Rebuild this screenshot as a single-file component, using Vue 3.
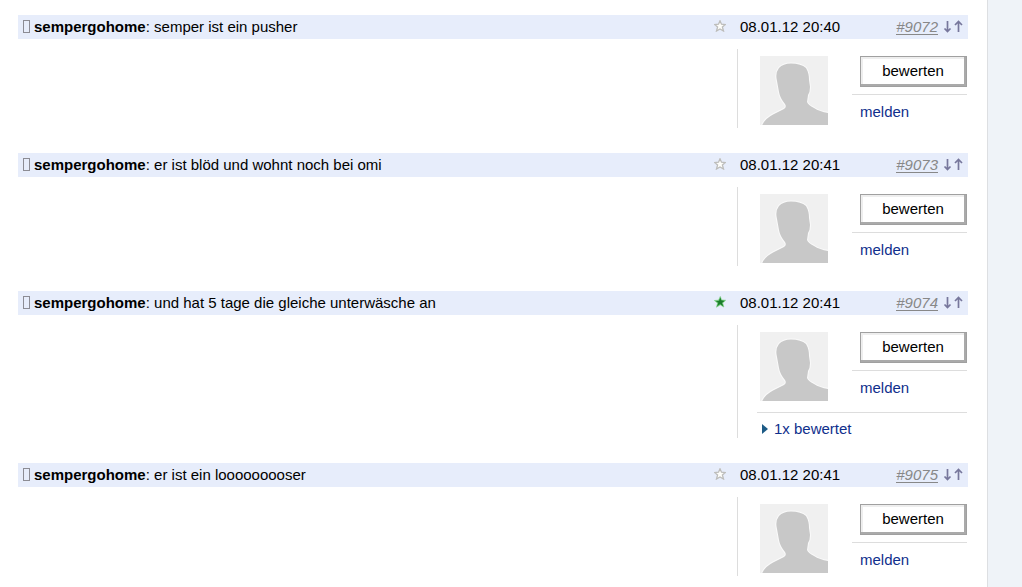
<script setup>
const posts = [
  { id: 9072, user: 'sempergohome', text: 'semper ist ein pusher', date: '08.01.12 20:40', ratings: 0 },
  { id: 9073, user: 'sempergohome', text: 'er ist blöd und wohnt noch bei omi', date: '08.01.12 20:41', ratings: 0 },
  { id: 9074, user: 'sempergohome', text: 'und hat 5 tage die gleiche unterwäsche an', date: '08.01.12 20:41', ratings: 1 },
  { id: 9075, user: 'sempergohome', text: 'er ist ein looooooooser', date: '08.01.12 20:41', ratings: 0 },
]
</script>

<template>
  <div class="page">
    <main class="thread">
      <article v-for="post in posts" :id="'p' + post.id" :key="post.id" class="post">
        <header class="bar">
          <span class="mark"></span>
          <h2 class="title"><b>{{ post.user }}</b>: {{ post.text }}</h2>
          <div class="meta">
            <svg class="star" viewBox="0 0 12 12" aria-hidden="true">
              <template v-if="post.ratings">
                <path
                  d="M6.300 .5 7.500 4 11.600 4.300 8.600 6.900 9.800 11 6.200 8.800 2.500 11.200 3.600 7 .4 4.500 4.600 4.200Z"
                  fill="#3fae4b" stroke="#7fcf85" stroke-width=".7"
                />
                <path d="M6.300 1.500 7.200 4.600 10.500 5 7.800 6.800 9.200 10.200 6 7.800 3.300 10 4.500 6.600 2 5.200 5.200 5Z" fill="#1c7a2c" />
              </template>
              <path
                v-else
                d="M6 .8 7.500 4.200 11.300 4.500 8.400 7 9.500 11 6 8.900 2.500 11 3.600 7 .7 4.500 4.500 4.200Z"
                fill="#fdfdfa" stroke="#bdbdbb" stroke-width="1.300"
              />
            </svg>
            <time>{{ post.date }}</time>
            <a class="number" :href="'#p' + post.id">#{{ post.id }}</a>
            <a class="arrow" :href="'#p' + (post.id + 1)" aria-label="Nächster Beitrag">
              <svg viewBox="0 0 9 13"><path d="M4.500 1V11.500M1.500 8.500 4.500 11.500 7.500 8.500" /></svg>
            </a>
            <a class="arrow" :href="'#p' + (post.id - 1)" aria-label="Vorheriger Beitrag">
              <svg viewBox="0 0 9 13"><path d="M4.500 12V1.500M1 5 4.500 1.500 8 5" /></svg>
            </a>
          </div>
        </header>
        <aside class="side">
          <div class="tools">
            <svg class="avatar" viewBox="0 0 68 69" aria-hidden="true">
              <rect width="68" height="69" fill="#f0f0f0" />
              <path
                d="M2 70Q4 63 14 58L24 53Q27 51 25 48 20 42 19 36L17 25Q15 17 19 12 23 7.500 31 7.500 41 7.500 46 12 49 17 49 24L50 31Q50 36 48 39L47 46Q48 49 54 52 60 56 69 57V70Z"
                fill="#c8c8c8" stroke="#fafafa" stroke-width="2" paint-order="stroke"
              />
            </svg>
            <div class="actions">
              <button type="button" class="rate">bewerten</button>
              <a class="report" href="#melden">melden</a>
            </div>
          </div>
          <a v-if="post.ratings" class="rated" href="#bewertungen">
            <svg viewBox="0 0 6 10" aria-hidden="true"><path d="M0 0 6 5 0 10Z" /></svg>
            {{ post.ratings }}x bewertet
          </a>
        </aside>
      </article>
    </main>
  </div>
</template>

<style>
body {
  background: #eff3f8;
}
</style>

<style scoped>
.page {
  height: 100vh;
  overflow: hidden;
  padding-right: 34px;
  font: 15px/24px "Liberation Sans", Arial, sans-serif;
  color: #000;
}
.thread {
  box-sizing: border-box;
  min-height: 100%;
  padding: 15px 19px 0 18px;
  background: #fff;
  border-right: 1px solid #dddfe2;
}
.post {
  display: flex;
  flex-direction: column;
  margin-bottom: 25px;
}
.bar {
  display: flex;
  align-items: center;
  height: 24px;
  padding: 0 5px;
  background: #e7edfb;
}
.mark {
  box-sizing: border-box;
  width: 7px;
  height: 13px;
  margin: 0 4px 2px 0;
  border: 1px solid #8c8c94;
}
.title {
  flex: 1;
  margin: 0;
  font-size: 15px;
  font-weight: normal;
}
.meta {
  display: flex;
  align-items: center;
  width: 249px;
}
.star {
  width: 12px;
  height: 12px;
  margin: 0 14px 2px 0;
}
time {
  flex: 1;
}
.number {
  margin-right: 5px;
  line-height: 15px;
  font-style: italic;
  color: #888;
  text-decoration: none;
  border-bottom: 1px solid #888;
}
.arrow {
  display: flex;
  margin: 0 0 2px 2px;
}
.arrow svg {
  width: 9px;
  height: 13px;
  fill: none;
  stroke: #77779c;
  stroke-width: 1.7;
}
.number + .arrow {
  margin-left: 0;
}
.side {
  box-sizing: border-box;
  align-self: flex-end;
  width: 231px;
  min-height: 79px;
  margin-top: 10px;
  padding: 7px 1px 0 19px;
  border-left: 1px solid #ddd;
}
.tools {
  display: flex;
  gap: 24px;
  padding-left: 3px;
}
.avatar {
  width: 68px;
  height: 69px;
}
.actions {
  flex: 1;
}
.rate {
  display: block;
  width: 107px;
  height: 31px;
  margin: 0 0 7px 8px;
  padding: 0 1px 2px 0;
  font: inherit;
  line-height: 24px;
  color: #000;
  background: #fff;
  border: 1px solid #a0a0a0;
  box-shadow: inset -2px -2px #aaa, inset 2px 2px #eee;
}
.report {
  display: block;
  padding: 5px 8px 0;
  color: #0f2f8c;
  text-decoration: none;
  border-top: 1px solid #ddd;
}
.rated {
  display: flex;
  align-items: center;
  gap: 6px;
  margin-top: 11px;
  padding: 6px 0 0 5px;
  line-height: 19px;
  color: #0f2f8c;
  text-decoration: none;
  border-top: 1px solid #ddd;
}
.rated svg {
  width: 6px;
  height: 10px;
  fill: #1d5b86;
}
</style>
